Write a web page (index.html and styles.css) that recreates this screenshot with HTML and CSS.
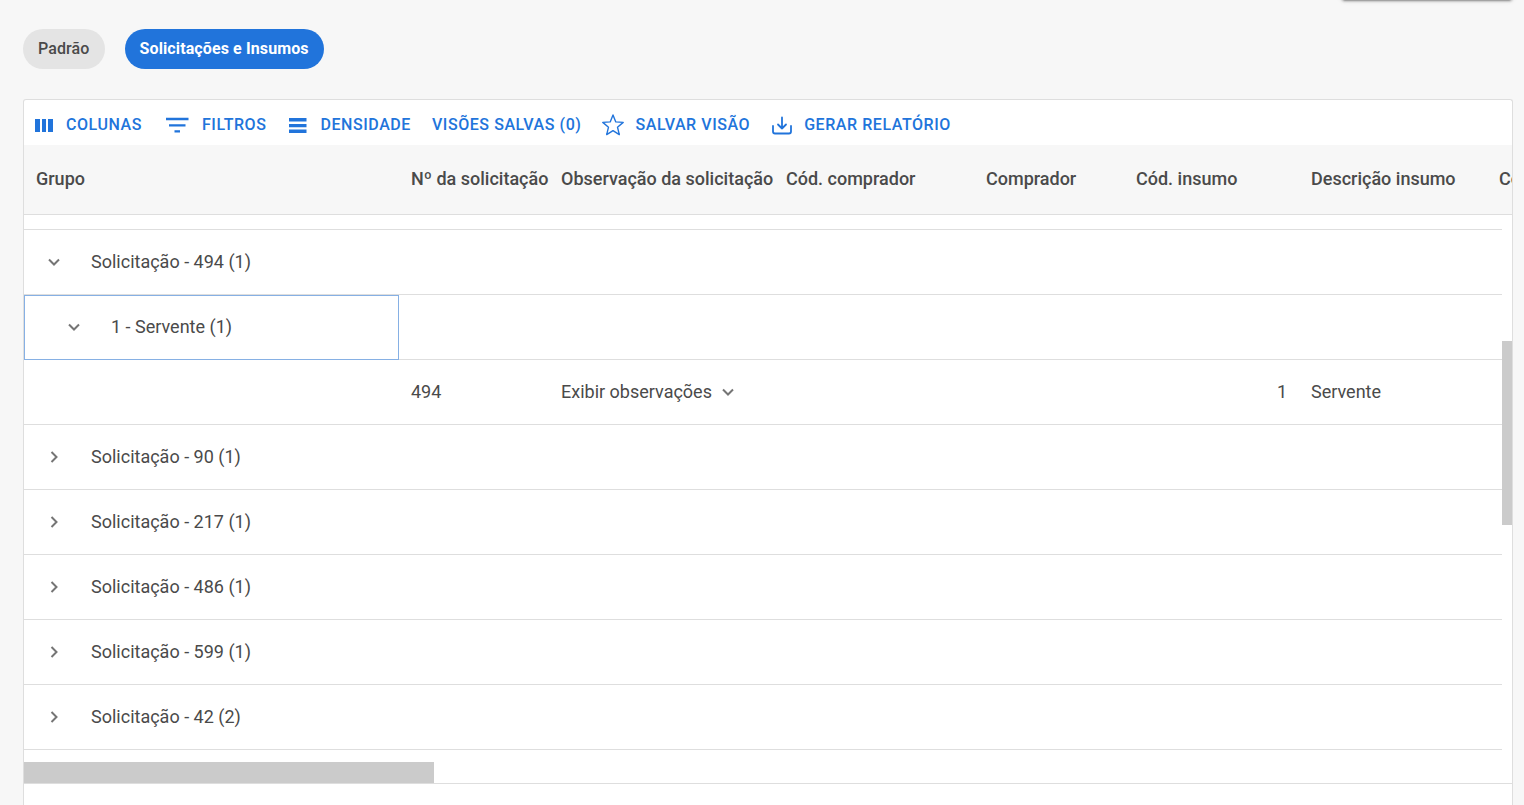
FILE: index.html
```
<!DOCTYPE html>
<html lang="pt-BR">
<head>
    <meta charset="UTF-8">
    <meta name="viewport" content="width=device-width, initial-scale=1.0">
    <title>Solicitações e Insumos</title>
    <link rel="stylesheet" href="styles.css">
</head>
<body>
    <div class="floating-action" aria-hidden="true"></div>
    <nav class="tabs">
        <button class="tab">Padrão</button>
        <button class="tab active">Solicitações e Insumos</button>
    </nav>

    <main class="grid">
        <div class="toolbar">
            <button>
                <svg width="22" height="24" viewBox="0 0 22 24"><path d="M2 6h5v13H2zM9 6h4v13H9zM15 6h5v13h-5z"/></svg>
                COLUNAS
            </button>
            <button>
                <svg width="28" height="24" viewBox="0 0 28 24"><path d="M3 4.700h22.500v2.500H3zM6 11.200h16.500v2.300H6zM11.500 17.200h5.500v2.300h-5.500z"/></svg>
                FILTROS
            </button>
            <button>
                <svg width="22" height="24" viewBox="0 0 22 24"><path d="M2 5h17.500v3.500H2zM2 10.900h17.500v3.300H2zM2 16.400h17.500v3.500H2z"/></svg>
                DENSIDADE
            </button>
            <button>VISÕES SALVAS (0)</button>
            <button>
                <svg class="line" width="22" height="24" viewBox="0 0 22 24"><path d="M11 2l2.800 6.900 7.400.5-5.700 4.800 1.800 7.400-6.300-4-6.300 4 1.800-7.400L.8 9.400l7.400-.5z"/></svg>
                SALVAR VISÃO
            </button>
            <button>
                <svg class="line thick" width="22" height="24" viewBox="0 0 22 24"><path d="M2 13v5.500a2 2 0 0 0 2 2h14a2 2 0 0 0 2-2V13M11 4.500v11M7 11.500l4 4 4-4"/></svg>
                GERAR RELATÓRIO
            </button>
        </div>

        <div class="table-area">
            <table>
                <colgroup>
                    <col class="col-grupo">
                    <col class="col-numero">
                    <col class="col-obs">
                    <col class="col-cod-comprador">
                    <col class="col-comprador">
                    <col class="col-cod-insumo">
                    <col class="col-descricao">
                    <col class="col-extra">
                </colgroup>
                <thead>
                    <tr>
                        <th>Grupo</th>
                        <th>Nº da solicitação</th>
                        <th>Observação da solicitação</th>
                        <th>Cód. comprador</th>
                        <th>Comprador</th>
                        <th>Cód. insumo</th>
                        <th>Descrição insumo</th>
                        <th>Co</th>
                    </tr>
                </thead>
                <tbody>
                    <tr class="cut"><td colspan="8"></td></tr>
                    <tr>
                        <td><div class="group"><button class="toggle open" aria-label="Recolher"><svg width="20" height="20" viewBox="0 0 20 20"><path d="M7.500 5l5 5-5 5"/></svg></button>Solicitação - 494 (1)</div></td>
                        <td colspan="7"></td>
                    </tr>
                    <tr>
                        <td class="selected"><div class="group child"><button class="toggle open" aria-label="Recolher"><svg width="20" height="20" viewBox="0 0 20 20"><path d="M7.500 5l5 5-5 5"/></svg></button>1 - Servente (1)</div></td>
                        <td colspan="7"></td>
                    </tr>
                    <tr>
                        <td></td>
                        <td>494</td>
                        <td><button class="show-obs">Exibir observações<svg class="down" width="20" height="20" viewBox="0 0 20 20"><path d="M7.500 5l5 5-5 5"/></svg></button></td>
                        <td></td>
                        <td></td>
                        <td class="number">1</td>
                        <td>Servente</td>
                        <td></td>
                    </tr>
                    <tr>
                        <td><div class="group"><button class="toggle" aria-label="Expandir"><svg width="20" height="20" viewBox="0 0 20 20"><path d="M7.500 5l5 5-5 5"/></svg></button>Solicitação - 90 (1)</div></td>
                        <td colspan="7"></td>
                    </tr>
                    <tr>
                        <td><div class="group"><button class="toggle" aria-label="Expandir"><svg width="20" height="20" viewBox="0 0 20 20"><path d="M7.500 5l5 5-5 5"/></svg></button>Solicitação - 217 (1)</div></td>
                        <td colspan="7"></td>
                    </tr>
                    <tr>
                        <td><div class="group"><button class="toggle" aria-label="Expandir"><svg width="20" height="20" viewBox="0 0 20 20"><path d="M7.500 5l5 5-5 5"/></svg></button>Solicitação - 486 (1)</div></td>
                        <td colspan="7"></td>
                    </tr>
                    <tr>
                        <td><div class="group"><button class="toggle" aria-label="Expandir"><svg width="20" height="20" viewBox="0 0 20 20"><path d="M7.500 5l5 5-5 5"/></svg></button>Solicitação - 599 (1)</div></td>
                        <td colspan="7"></td>
                    </tr>
                    <tr>
                        <td><div class="group"><button class="toggle" aria-label="Expandir"><svg width="20" height="20" viewBox="0 0 20 20"><path d="M7.500 5l5 5-5 5"/></svg></button>Solicitação - 42 (2)</div></td>
                        <td colspan="7"></td>
                    </tr>
                </tbody>
            </table>
            <div class="scroll-y"><div class="thumb"></div></div>
        </div>
        <div class="scroll-x"><div class="thumb"></div></div>
        <div class="grid-footer"></div>
    </main>
</body>
</html>
```
FILE: styles.css
```
* {
    box-sizing: border-box;
}

body {
    margin: 0;
    padding: 29px 11px 0 23px;
    height: 100vh;
    display: flex;
    flex-direction: column;
    gap: 30px;
    overflow: hidden;
    background-color: #f7f7f7;
    color: #4a4a4a;
    font-family: Roboto, sans-serif;
    font-size: 18px;
    line-height: 24px;
}

button {
    font: inherit;
    color: inherit;
    background: none;
    border: none;
    padding: 0;
    cursor: pointer;
}

/* button scrolled past the top, only its shadow shows */
.floating-action {
    position: absolute;
    top: -40px;
    right: 11px;
    width: 172px;
    height: 40px;
    border-radius: 4px;
    box-shadow: 0 3px 1px -2px rgba(0, 0, 0, 0.2), 0 2px 2px 0 rgba(0, 0, 0, 0.14), 0 1px 5px 0 rgba(0, 0, 0, 0.12);
}

.tabs {
    display: flex;
    gap: 20px;
}

.tab {
    height: 40px;
    padding: 0 15px;
    border-radius: 20px;
    background-color: #e4e4e4;
    font-size: 16px;
    font-weight: 500;
    letter-spacing: 0.00714em;
}

.tab.active {
    background-color: #2174db;
    color: white;
    font-weight: 700;
}

.grid {
    flex: 1;
    min-height: 0;
    display: flex;
    flex-direction: column;
    background-color: white;
    border: 1px solid #dedede;
    border-bottom: none;
    border-radius: 3px 3px 0 0;
}

.toolbar {
    height: 45px;
    flex-shrink: 0;
    padding: 4px 9px 0;
    display: flex;
    align-items: center;
    gap: 21px;
}

.toolbar button {
    display: flex;
    align-items: center;
    gap: 11px;
    color: #2174db;
    font-size: 16px;
    font-weight: 500;
    letter-spacing: 0.035em;
    white-space: nowrap;
}

.toolbar svg {
    fill: #2174db;
}

.toolbar svg.line {
    fill: none;
    stroke: #2174db;
    stroke-width: 1.4;
    stroke-linejoin: round;
}

.toolbar svg.thick {
    stroke-width: 1.8;
    stroke-linecap: round;
}

.table-area {
    position: relative;
    height: 617px;
    flex-shrink: 0;
    overflow: hidden;
}

table {
    width: 1662px;
    table-layout: fixed;
    border-collapse: separate;
    border-spacing: 0;
}

.col-grupo { width: 375px; }
.col-numero { width: 150px; }
.col-obs { width: 225px; }
.col-cod-comprador { width: 200px; }
.col-comprador { width: 150px; }
.col-cod-insumo { width: 175px; }
.col-descricao { width: 188px; }
.col-extra { width: 199px; }

th, td {
    padding: 0 12px;
    border-bottom: 1px solid #dedede;
    text-align: left;
    white-space: nowrap;
}

th {
    height: 70px;
    padding-bottom: 2px;
    background-color: #f7f7f7;
    font-weight: 500;
}

td {
    height: 65px;
}

.cut td {
    height: 15px;
}

td.number {
    text-align: right;
}

td.selected {
    outline: 1px solid #86b0e4;
    outline-offset: -1px;
}

.group {
    display: flex;
    align-items: center;
    gap: 27px;
    padding-left: 8px;
}

.group.child {
    padding-left: 28px;
}

.toggle,
.show-obs {
    display: flex;
    align-items: center;
}

.show-obs {
    gap: 6px;
}

td svg {
    fill: none;
    stroke: #757575;
    stroke-width: 2;
}

.toggle.open svg,
svg.down {
    transform: rotate(90deg);
}

.scroll-y {
    position: absolute;
    top: 70px;
    right: 0;
    bottom: 0;
    width: 10px;
    padding-top: 126px;
    background-color: white;
}

.scroll-y .thumb {
    height: 184px;
    background-color: #cbcbcb;
}

.scroll-x {
    height: 22px;
    flex-shrink: 0;
    border-bottom: 1px solid #dedede;
}

.scroll-x .thumb {
    width: 410px;
    height: 21px;
    background-color: #cbcbcb;
}

.grid-footer {
    flex: 1;
}
```
